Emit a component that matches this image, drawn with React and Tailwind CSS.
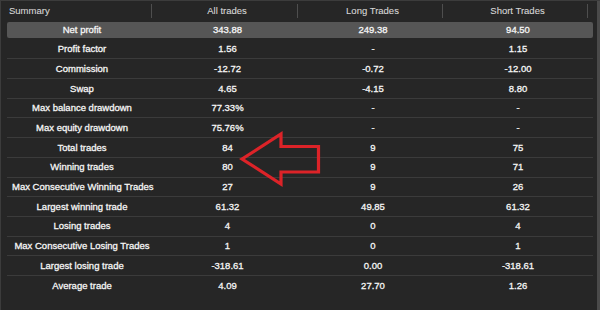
const rows = [
  ['Net profit', '343.88', '249.38', '94.50'],
  ['Profit factor', '1.56', '-', '1.15'],
  ['Commission', '-12.72', '-0.72', '-12.00'],
  ['Swap', '4.65', '-4.15', '8.80'],
  ['Max balance drawdown', '77.33%', '-', '-'],
  ['Max equity drawdown', '75.76%', '-', '-'],
  ['Total trades', '84', '9', '75'],
  ['Winning trades', '80', '9', '71'],
  ['Max Consecutive Winning Trades', '27', '9', '26'],
  ['Largest winning trade', '61.32', '49.85', '61.32'],
  ['Losing trades', '4', '0', '4'],
  ['Max Consecutive Losing Trades', '1', '0', '1'],
  ['Largest losing trade', '-318.61', '0.00', '-318.61'],
  ['Average trade', '4.09', '27.70', '1.26'],
];

const headers = ['All trades', 'Long Trades', 'Short Trades'];

const App = () => {
  return (
    <div
      className="relative w-[600px] h-[310px] overflow-hidden bg-[#262626] border-l border-t border-[#3c3c3c] text-[9.5px] leading-none"
      style={{ fontFamily: '"Liberation Sans", Arial, sans-serif' }}
    >
      <div className="absolute right-0 top-0 h-full w-[3px] bg-[#4a4a4a]" />

      <div className="pl-[6px]">
        {/* Header */}
        <div className="grid grid-cols-[145px_146px_145px_145px] h-[19px] text-[#d6d6d6] [-webkit-text-stroke:0.1px_#d6d6d6]">
          <div className="flex items-center">
            <span className="flex-1 pl-[2px]">Summary</span>
            <span className="w-px h-[14px] bg-[#4e4e4e]" />
          </div>
          {headers.map((h) => (
            <div key={h} className="flex items-center">
              <span className="flex-1 text-center pl-[5px]">{h}</span>
              <span className="w-px h-[14px] bg-[#4e4e4e]" />
            </div>
          ))}
        </div>

        {/* Body */}
        <div className="w-[586px] text-[#f5f5f5] [-webkit-text-stroke:0.3px_#f5f5f5]">
          {rows.map((r, i) => {
            const first = i === 0;
            const lined = i > 0 && i < rows.length - 1;
            return (
              <div
                key={r[0]}
                className={`h-[19.7px] ${lined ? 'border-b border-[#3b3b3b]' : ''} ${first ? 'py-[2px]' : ''}`}
              >
                <div
                  className={`h-full grid grid-cols-[145px_146px_145px_145px_5px] items-center ${
                    first ? 'bg-[#565656] rounded-[2px]' : ''
                  }`}
                >
                  {r.map((c, j) => (
                    <span key={j} className="text-center pl-[5px] whitespace-nowrap">
                      {c}
                    </span>
                  ))}
                  <span />
                </div>
              </div>
            );
          })}
        </div>
      </div>

      {/* Red arrow annotation */}
      <svg
        className="absolute left-0 top-0 pointer-events-none"
        width="600"
        height="310"
        viewBox="0 0 600 310"
      >
        <polygon
          points="241,158 280,133 280,145.5 317.5,145.5 317.5,171 280,171 280,183"
          fill="none"
          stroke="#dc2328"
          strokeWidth="3.2"
          strokeLinejoin="miter"
        />
      </svg>
    </div>
  );
};

export default App;
